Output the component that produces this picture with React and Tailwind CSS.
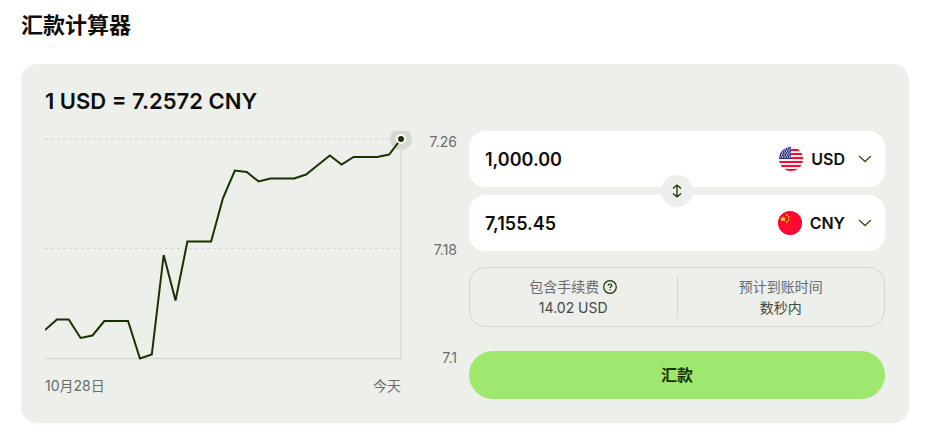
import React, { useState } from "react";

const CHART_WIDTH = 356;

// height of the rate line for each day, measured from the top of the chart
const rates = [
  199, 188.5, 188.5, 207, 204.5, 190, 190, 190, 227.5, 223.5, 124, 169.5, 110.5,
  110.5, 110.5, 67, 39.5, 41, 50.5, 47.5, 47.5, 47.5, 43.5, 34, 24.5, 33.5, 26,
  26, 26, 23.5, 8,
];

const points = rates
  .map((y, i) => `${(i * CHART_WIDTH) / (rates.length - 1)},${y}`)
  .join(" ");

const RateChart = () => (
  <svg viewBox="0 0 368 229" className="block w-full h-auto" aria-hidden="true">
    <line x1="0" y1="8" x2="356" y2="8" stroke="#dddfdb" strokeWidth="2" strokeDasharray="3 3" />
    <line x1="0" y1="117.5" x2="356" y2="117.5" stroke="#d5d7d3" strokeDasharray="3 3" />
    <line x1="0" y1="227.5" x2="357" y2="227.5" stroke="#cfd1cd" />
    <line x1="356" y1="8" x2="356" y2="228" stroke="#dddfdb" strokeWidth="2" />
    <circle cx="356" cy="8" r="11" fill="#d5dad1" />
    <polyline points={points} fill="none" stroke="#163300" strokeWidth="2" />
    <circle cx="356" cy="8" r="4" fill="#163300" stroke="#fff" strokeWidth="2" />
  </svg>
);

const UsFlag = () => (
  <svg viewBox="0 0 24 24" className="size-6 rounded-full shrink-0" aria-hidden="true">
    <rect width="24" height="24" fill="#f4f4f6" />
    {[2, 6, 10, 14, 18, 22].map((y) => (
      <rect key={y} y={y} width="24" height="2" fill="#ff0931" />
    ))}
    <rect width="12" height="12" fill="#2b2c86" />
    {[2, 4, 6, 8, 10].map((y) =>
      [1, 3.5, 6, 8.5, 11].map((x) => (
        <circle key={`${x}-${y}`} cx={y % 4 === 0 ? x - 1 : x} cy={y} r="0.7" fill="#fff" />
      ))
    )}
    <circle cx="12" cy="12" r="11.5" fill="none" stroke="#000" strokeOpacity="0.08" />
  </svg>
);

const CnFlag = () => (
  <svg viewBox="0 0 24 24" className="size-6 rounded-full shrink-0" aria-hidden="true">
    <rect width="24" height="24" fill="#ff0931" />
    <path
      d="M5 5l.9 1.9 2.1.2-1.5 1.4.4 2.1L5 9.6l-1.9 1 .4-2.1L2 7.1l2.1-.2z"
      fill="#ffda2c"
    />
    <g fill="#ffc400">
      <rect x="8" y="3" width="1.3" height="2" />
      <rect x="10" y="5" width="1.3" height="2" />
      <rect x="10" y="8" width="1.3" height="2" />
      <rect x="8" y="10" width="1.3" height="2" />
    </g>
    <circle cx="12" cy="12" r="11.5" fill="none" stroke="#000" strokeOpacity="0.08" />
  </svg>
);

const MoneyField = ({ id, label, amount, onAmount, currency, onCurrency }) => (
  <div className="flex items-center h-14 pl-4 pr-3 bg-white rounded-2xl">
    <input
      id={id}
      aria-label={label}
      value={amount}
      onChange={(e) => onAmount(e.target.value)}
      className="flex-1 min-w-0 pt-0.5 text-lg font-semibold bg-transparent outline-none"
    />
    {currency === "USD" ? <UsFlag /> : <CnFlag />}
    <div className="relative flex items-center">
      <select
        aria-label={`${label}货币`}
        value={currency}
        onChange={(e) => onCurrency(e.target.value)}
        className="appearance-none field-sizing-content pl-2 pr-7 text-base font-semibold bg-transparent outline-none"
      >
        <option>USD</option>
        <option>CNY</option>
      </select>
      <svg
        viewBox="0 0 16 16"
        className="absolute right-0 size-4 pointer-events-none"
        fill="none"
        stroke="#33511f"
        strokeWidth="1.3"
        aria-hidden="true"
      >
        <path d="M2 5l6 5.5L14 5" />
      </svg>
    </div>
  </div>
);

const App = () => {
  const [source, setSource] = useState("1,000.00");
  const [target, setTarget] = useState("7,155.45");
  const [from, setFrom] = useState("USD");
  const [to, setTo] = useState("CNY");

  const swap = () => {
    setSource(target);
    setTarget(source);
    setFrom(to);
    setTo(from);
  };

  return (
    <main className="pl-[21px] pr-[22px] pt-2.5 pb-4 font-['Inter','Noto_Sans_CJK_SC',sans-serif] text-[#0e0f0c]">
      <h1 className="text-[22px] leading-[30px] font-semibold">汇款计算器</h1>

      <section className="mt-6 p-6 bg-[#ecefea] rounded-2xl">
        <h2 className="mb-[17px] text-[22px] leading-[26px] font-semibold">
          1 USD = 7.2572 CNY
        </h2>

        <div className="grid grid-cols-2 gap-2">
          <div className="flex items-start pr-1 text-sm leading-[22px] text-[#6a6c6a]">
            <div className="flex-1">
              <RateChart />
              <div className="flex justify-between mt-[15px] pr-3">
                <span>10月28日</span>
                <span>今天</span>
              </div>
            </div>
            <div className="flex flex-col justify-between items-end w-11 h-[238px]">
              <span>7.26</span>
              <span>7.18</span>
              <span>7.1</span>
            </div>
          </div>

          <form onSubmit={(e) => e.preventDefault()}>
            <div className="relative flex flex-col gap-2">
              <MoneyField
                id="source"
                label="汇款金额"
                amount={source}
                onAmount={setSource}
                currency={from}
                onCurrency={setFrom}
              />
              <MoneyField
                id="target"
                label="收款金额"
                amount={target}
                onAmount={setTarget}
                currency={to}
                onCurrency={setTo}
              />
              <button
                type="button"
                onClick={swap}
                aria-label="交换货币"
                className="absolute left-1/2 top-1/2 -translate-x-1/2 -translate-y-1/2 flex items-center justify-center size-8 rounded-full bg-[#ecefeb]"
              >
                <svg viewBox="0 0 16 16" className="size-4" fill="none" stroke="#163300" strokeWidth="1.3">
                  <path d="M8 2v12M4 5.5L8 2l4 3.5M4 10.5L8 14l4-3.5" />
                </svg>
              </button>
            </div>

            <dl className="flex items-center h-[60px] mt-4 border border-[#d2d5d0] rounded-2xl text-sm leading-[21px] text-center">
              <div className="flex-1">
                <dt className="flex items-center justify-center gap-1 text-[#6a6c6a]">
                  包含手续费
                  <button type="button" aria-label="手续费说明">
                    <svg viewBox="0 0 14 14" className="block size-3.5" fill="none" stroke="#163300" strokeWidth="1.2">
                      <circle cx="7" cy="7" r="6.3" />
                      <path d="M5.2 5.7c0-1 .8-1.7 1.8-1.7s1.8.7 1.8 1.6c0 1.2-1.8 1.2-1.8 2.5M7 9v1.3" />
                    </svg>
                  </button>
                </dt>
                <dd className="text-[#454745]">14.02 USD</dd>
              </div>
              <div className="flex-1 border-l border-[#d2d5d0]">
                <dt className="text-[#6a6c6a]">预计到账时间</dt>
                <dd className="text-[#454745]">数秒内</dd>
              </div>
            </dl>

            <button
              type="submit"
              className="w-full h-12 mt-6 rounded-full bg-[#9fe870] text-base font-semibold text-[#163300]"
            >
              汇款
            </button>
          </form>
        </div>
      </section>
    </main>
  );
};

export default App;
